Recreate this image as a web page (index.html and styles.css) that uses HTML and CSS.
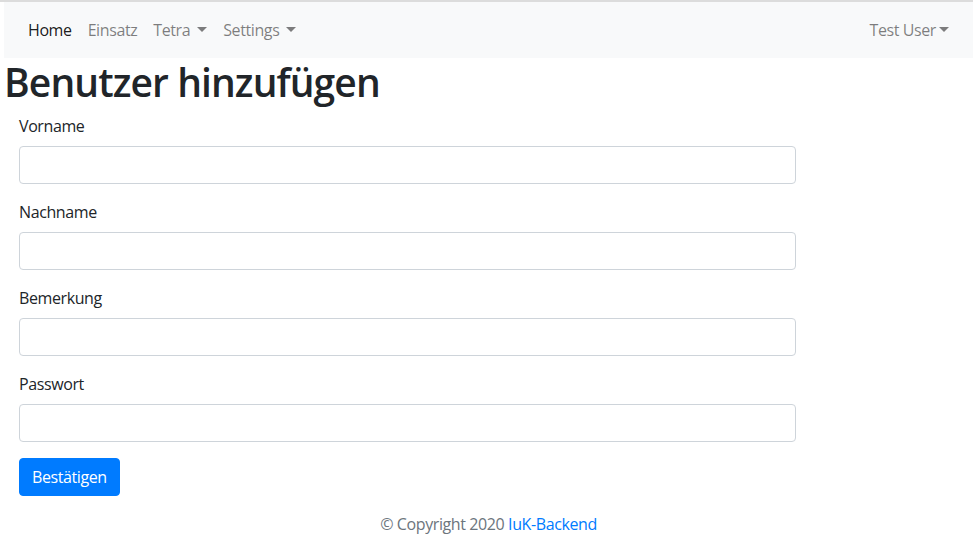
FILE: index.html
```html
<!DOCTYPE html>
<html lang="de">
<head>
<meta charset="utf-8">
<title>Benutzer hinzufügen</title>
<link rel="stylesheet" href="styles.css">
</head>
<body>
<div class="page">
  <nav class="navbar">
    <ul class="nav-main">
      <li><a class="nav-link active" href="#">Home</a></li>
      <li><a class="nav-link" href="#">Einsatz</a></li>
      <li><a class="nav-link dropdown" href="#">Tetra</a></li>
      <li><a class="nav-link dropdown" href="#">Settings</a></li>
    </ul>
    <ul class="nav-right">
      <li><a class="nav-link dropdown tight" href="#">Test User</a></li>
    </ul>
  </nav>
  <h1 class="title">Benutzer hinzufügen</h1>
  <div class="row">
    <form class="col-10">
      <div class="form-group">
        <label for="vorname">Vorname</label>
        <input id="vorname" class="form-control" type="text">
      </div>
      <div class="form-group">
        <label for="nachname">Nachname</label>
        <input id="nachname" class="form-control" type="text">
      </div>
      <div class="form-group">
        <label for="bemerkung">Bemerkung</label>
        <input id="bemerkung" class="form-control" type="text">
      </div>
      <div class="form-group">
        <label for="passwort">Passwort</label>
        <input id="passwort" class="form-control" type="password">
      </div>
      <button class="btn" type="submit">Bestätigen</button>
    </form>
  </div>
  <footer class="footer">© Copyright 2020 <a href="#">IuK-Backend</a></footer>
</div>
</body>
</html>
```
FILE: styles.css
```css
* { box-sizing: border-box; }
html, body { margin: 0; padding: 0; background: #fff; }
body {
  font-family: "Open Sans", "Noto Sans", sans-serif;
  font-size: 16px;
  line-height: 1.5;
  letter-spacing: -0.4px;
  color: #212529;
  border-top: 2px solid #dcdcdc;
}
.page { padding-left: 4px; }
.navbar {
  display: flex;
  align-items: center;
  justify-content: space-between;
  background: #f8f9fa;
  padding: 8px 16px;
  height: 56px;
}
.nav-main, .nav-right {
  display: flex;
  list-style: none;
  margin: 0;
  padding: 0;
}
.nav-link {
  display: block;
  padding: 8px;
  color: rgba(0,0,0,.5);
  text-decoration: none;
}
.nav-link.active { color: rgba(0,0,0,.9); }
.nav-link.dropdown::after {
  content: "";
  display: inline-block;
  margin-left: 7px;
  vertical-align: 4px;
  border-top: 5px solid;
  border-right: 5px solid transparent;
  border-left: 5px solid transparent;
}
.nav-link.tight::after { margin-left: 3px; }
.title {
  margin: 0 0 8px;
  font-size: 39px;
  font-weight: 600;
  letter-spacing: -0.9px;
  line-height: 48px;
}
.row { display: flex; }
.col-10 { flex: 0 0 83.3333%; padding: 0 15px; }
.form-group { margin-bottom: 16px; }
label { display: inline-block; margin-bottom: 8px; }
.form-control {
  display: block;
  width: 100%;
  height: 38px;
  padding: 6px 12px;
  font: inherit;
  letter-spacing: inherit;
  color: #495057;
  background: #fff;
  border: 1px solid #ced4da;
  border-radius: 4px;
}
.btn {
  font: inherit;
  letter-spacing: inherit;
  color: #fff;
  background: #007bff;
  border: 1px solid #007bff;
  border-radius: 4px;
  padding: 6px 12px;
  line-height: 1.5;
}
.footer {
  text-align: center;
  color: #6c757d;
  padding-top: 16px;
}
.footer a { color: #007bff; text-decoration: none; }
```
